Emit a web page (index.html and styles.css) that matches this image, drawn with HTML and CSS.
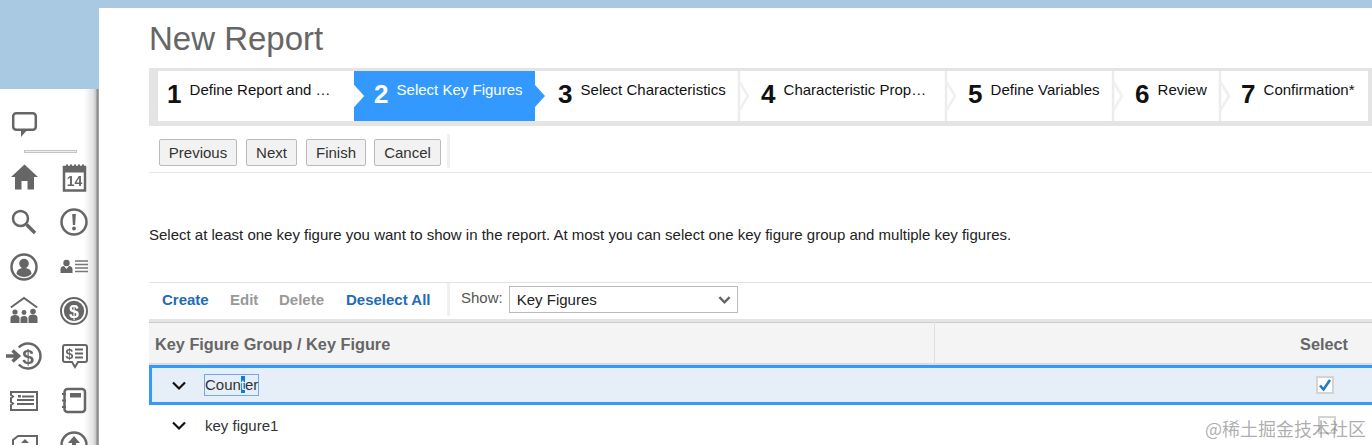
FILE: index.html
```html
<!DOCTYPE html>
<html lang="en">
<head>
<meta charset="utf-8">
<title>New Report</title>
<link rel="stylesheet" href="styles.css">
</head>
<body>
<aside class="side">
  <div class="chat-row">
    <svg class="ico" viewBox="0 0 30 30"><rect x="3.2" y="4.2" width="22.6" height="16.6" rx="3" class="ln"/><path d="M11 20h7l-7 8z" class="fl"/></svg>
  </div>
  <div class="side-rule"></div>
  <div class="ico-grid">
    <svg class="ico" viewBox="0 0 30 30"><path d="M14.5 1.5 1 14h4v12.5h6.5V18h6v8.500h6.500V14H28z" class="fl"/></svg>
    <svg class="ico" viewBox="0 0 30 30"><rect x="4" y="4" width="21" height="23.500" class="ln"/><rect x="3" y="3" width="23" height="6.500" class="fl"/><path d="M7 1.500v5M11 1.500v5M15 1.500v5M19 1.500v5M23 1.500v5" class="wl"/><text x="14.500" y="23" class="ic-t ic-14">14</text></svg>
    <svg class="ico" viewBox="0 0 30 30"><circle cx="10.500" cy="11.500" r="7.500" class="ln"/><path d="M16.500 17.500 25 26" class="ln thick"/></svg>
    <svg class="ico" viewBox="0 0 30 30"><circle cx="14" cy="15" r="12.500" class="ln"/><path d="M12.200 7h3.600l-.7 11h-2.200z" class="fl"/><circle cx="14" cy="21.500" r="1.900" class="fl"/></svg>
    <svg class="ico" viewBox="0 0 30 30"><circle cx="14" cy="15" r="12.500" class="ln"/><circle cx="14" cy="11.500" r="4.800" class="fl"/><path d="M6.500 22c0-4.500 4-6 7.500-6s7.500 1.500 7.500 6c-2 2-5 3-7.500 3s-5.500-1-7.500-3z" class="fl"/></svg>
    <svg class="ico" viewBox="0 0 30 30"><circle cx="6.500" cy="11" r="3.200" class="fl"/><path d="M.5 21v-4c0-2 2-3 3.500-3l2.500 3 2.500-3c1.500 0 3.500 1 3.500 3v4z" class="fl"/><path d="M15 9h13M15 12.500h13M15 16h13M15 19.500h13" class="th"/></svg>
    <svg class="ico" viewBox="0 0 30 30"><path d="M.8 11.500 14 2l13.200 9.500" class="md"/><circle cx="5" cy="16" r="2.600" class="fl"/><circle cx="14" cy="16.500" r="2.400" class="fl"/><circle cx="23" cy="15.500" r="2.800" class="fl"/><path d="M.5 27v-5c0-2 2-3 4.500-3s4.500 1 4.500 3v5zM10.500 27v-4.500c0-1.500 1.500-2.500 3.500-2.500s3.500 1 3.500 2.500V27zM18.500 27v-5.500c0-2 2-3 4.500-3s4.500 1 4.500 3V27z" class="fl"/></svg>
    <svg class="ico" viewBox="0 0 30 30"><circle cx="14" cy="15" r="13" class="md"/><circle cx="14" cy="15" r="10.200" class="fl"/><text x="14" y="21.500" class="ic-t ic-w">$</text></svg>
    <svg class="ico" viewBox="0 0 30 30"><path d="M8.800 6.500A12.500 12.500 0 1 1 8.800 23.500" class="ln"/><path d="M-4 15H7M2.500 9.500 8.500 15l-6 5.500" class="ln thick"/><text x="18" y="22.500" class="ic-t ic-d">$</text></svg>
    <svg class="ico" viewBox="0 0 30 30"><path d="M5 4h20a2 2 0 0 1 2 2v13a2 2 0 0 1-2 2h-7l-3 5-3-5H5a2 2 0 0 1-2-2V6a2 2 0 0 1 2-2z" class="md"/><text x="9.500" y="17.500" class="ic-t ic-s">$</text><path d="M15 8.500h8M15 12.500h8M15 16.500h8" class="md"/></svg>
    <svg class="ico" viewBox="0 0 30 30"><path d="M1 7h26v18H1v-5l2-1.500-2-1.500v-4l2-1.500-2-1.500z" class="md"/><rect x="8" y="10" width="3" height="2.500" class="fl"/><path d="M12 11.500h12M7 15h17M7 19h17" class="md"/></svg>
    <svg class="ico" viewBox="0 0 30 30"><rect x="4.500" y="4" width="20.500" height="23" rx="3" class="ln"/><rect x="10" y="8" width="11" height="4.500" class="fl"/><path d="M2 9h4M2 15.500h4M2 22h4" class="md"/></svg>
    <svg class="ico" viewBox="0 0 30 30"><path d="M3 30V10l5-4h19v24" class="md"/><path d="M15 9l4 4h-8z" class="fl"/></svg>
    <svg class="ico" viewBox="0 0 30 30"><circle cx="14" cy="15" r="12.500" class="ln"/><path d="M14 6l6 7h-4v8h-4v-8H8z" class="fl"/></svg>
  </div>
</aside>

<main class="main">
  <h1 class="title">New Report</h1>

  <ol class="stepper">
    <li class="step w1"><b class="num">1</b><span class="lab">Define Report and …</span>
      <svg class="notch" viewBox="0 0 12 50"><path d="M0 14 10 25 0 36z" class="notch-w"/></svg></li>
    <li class="step w2 current"><b class="num">2</b><span class="lab">Select Key Figures</span>
      <svg class="tip" viewBox="0 0 12 50"><path d="M0 14 10 25 0 36z" class="tip-b"/></svg></li>
    <li class="step w3"><b class="num">3</b><span class="lab">Select Characteristics</span>
      <svg class="sep" viewBox="0 0 14 50"><path d="M2 0v50" class="sep-l"/><path d="M2 10 11 25 2 40" class="sep-c"/></svg></li>
    <li class="step w4"><b class="num">4</b><span class="lab">Characteristic Prop…</span>
      <svg class="sep" viewBox="0 0 14 50"><path d="M2 0v50" class="sep-l"/><path d="M2 10 11 25 2 40" class="sep-c"/></svg></li>
    <li class="step w5"><b class="num">5</b><span class="lab">Define Variables</span>
      <svg class="sep" viewBox="0 0 14 50"><path d="M2 0v50" class="sep-l"/><path d="M2 10 11 25 2 40" class="sep-c"/></svg></li>
    <li class="step w6"><b class="num">6</b><span class="lab">Review</span>
      <svg class="sep" viewBox="0 0 14 50"><path d="M2 0v50" class="sep-l"/><path d="M2 10 11 25 2 40" class="sep-c"/></svg></li>
    <li class="step w7"><b class="num">7</b><span class="lab">Confirmation*</span></li>
  </ol>

  <div class="actions">
    <button class="btn b-prev" type="button">Previous</button>
    <button class="btn b-next" type="button">Next</button>
    <button class="btn b-fin" type="button">Finish</button>
    <button class="btn b-can" type="button">Cancel</button>
    <span class="vbar"></span>
  </div>

  <p class="hint">Select at least one key figure you want to show in the report. At most you can select one key figure group and multiple key figures.</p>

  <div class="tools">
    <a class="tl tl-live l-create">Create</a>
    <a class="tl l-edit">Edit</a>
    <a class="tl l-del">Delete</a>
    <a class="tl tl-live l-desel">Deselect All</a>
    <span class="vbar2"></span>
    <span class="show">Show:</span>
    <div class="sel">Key Figures
      <svg class="sel-ch" viewBox="0 0 14 10"><path d="M1.500 2 7 7.500 12.500 2"/></svg>
    </div>
  </div>

  <div class="thead">
    <div class="th1">Key Figure Group / Key Figure</div>
    <div class="th2">Select</div>
  </div>
  <div class="row active">
    <svg class="chev" viewBox="0 0 14 10"><path d="M1 1.500 7 7.500 13 1.500"/></svg>
    <span class="name focus">Coun<span class="mark">t</span>er</span>
    <span class="cb checked"><svg viewBox="0 0 14 14"><path d="M2 7.500 5.500 11.500 12 2"/></svg></span>
  </div>
  <div class="row">
    <svg class="chev" viewBox="0 0 14 10"><path d="M1 1.500 7 7.500 13 1.500"/></svg>
    <span class="name">key figure1</span>
    <span class="cb"></span>
  </div>
</main>
<div class="wm">@稀土掘金技术社区</div>
</body>
</html>
```
FILE: styles.css
```css
* { box-sizing: border-box; }
html, body { margin: 0; height: 445px; overflow: hidden; }
body {
  display: flex;
  background: #a9c8e2;
  font-family: "Liberation Sans", Arial, sans-serif;
  color: #333;
  position: relative;
}

/* sidebar */
.side {
  flex: 0 0 99px;
  margin-top: 89px;
  padding-top: 13px;
  overflow: hidden;
  background: linear-gradient(90deg, #fff 0, #fff 84px, #e4e4e4 93px, #c4c4c4 96px, #8c8c8c 97px, #8c8c8c 98px, #bbb 99px);
}
.chat-row { width: 50px; height: 44.5px; display: flex; align-items: center; justify-content: center; }
.side-rule { width: 53px; height: 3px; margin: 3px 0 3px 24px; border: 1px solid #c4c4c4; background: #eee; }
.ico-grid { display: grid; grid-template-columns: 50px 50px; grid-auto-rows: 44.5px; place-items: center; }
.ico { width: 30px; height: 30px; overflow: visible; filter: blur(.35px); }
.ln { fill: none; stroke: #666; stroke-width: 2.5; }
.md { fill: none; stroke: #666; stroke-width: 2; }
.th { fill: none; stroke: #777; stroke-width: 1.5; }
.thick { stroke-width: 3.5; }
.fl { fill: #666; }
.wl { fill: none; stroke: #666; stroke-width: 2; stroke-dasharray: 2 1; }
.ic-t { font-family: "Liberation Sans", Arial, sans-serif; font-weight: 700; text-anchor: middle; fill: #666; }
.ic-14 { font-size: 14px; }
.ic-w { font-size: 18px; fill: #fff; }
.ic-d { font-size: 21px; }
.ic-s { font-size: 14px; }

/* main panel */
.main { flex: 1; min-width: 0; margin-top: 8px; padding-left: 50px; background: #fff; }
.title { margin: 0; height: 60px; font-size: 33px; line-height: 62px; font-weight: 400; color: #666; }

.stepper {
  display: flex;
  height: 58px;
  margin: 0;
  padding: 0;
  list-style: none;
  background: #e4e4e4;
  border-style: solid;
  border-color: #e4e4e4;
  border-width: 3px 4px 5px 9px;
}
.step { position: relative; display: flex; flex: none; background: #fff; color: #111; }
.w1 { width: 196px; padding-left: 9px; }
.w2 { width: 181px; padding-left: 20px; }
.w3 { width: 204px; padding-left: 23px; }
.w4 { width: 207px; padding-left: 22px; }
.w5 { width: 167px; padding-left: 22px; }
.w6 { width: 107px; padding-left: 22px; }
.w7 { width: 148px; padding-left: 21px; }
.current { background: #39f; color: #fff; }
.num { width: 22.6px; font-size: 26px; line-height: 47px; font-weight: 700; }
.lab { font-size: 15px; line-height: 38px; white-space: nowrap; }
.notch, .tip { position: absolute; top: 0; left: 100%; width: 12px; height: 50px; z-index: 2; }
.notch-w { fill: #fff; stroke: #e8e8e8; stroke-width: .6; }
.tip-b { fill: #39f; }
.w3 .sep, .w4 .sep, .w5 .sep, .w6 .sep { position: absolute; top: 0; left: calc(100% - 2px); width: 14px; height: 50px; z-index: 2; }
.sep-l { fill: none; stroke: #ececec; stroke-width: 2.5; }
.sep-c { fill: none; stroke: #f0f0f0; stroke-width: 2.5; }

.actions {
  display: flex;
  align-items: center;
  height: 47px;
  padding: 6px 0 0 10px;
  border-bottom: 1px solid #e5e5e5;
}
.btn {
  flex: none;
  height: 27px;
  margin: 0 9px 0 0;
  padding: 0;
  border: 1px solid #bbb;
  border-radius: 2px;
  background: #f2f2f2;
  font: 15px "Liberation Sans", Arial, sans-serif;
  color: #333;
}
.b-prev { width: 78px; }
.b-next { width: 51px; }
.b-fin { width: 60px; margin-right: 8px; }
.b-can { width: 67px; margin-right: 6px; }
.vbar { width: 3px; height: 34px; margin-top: -3px; background: #f0f0f0; }

.hint { margin: 53px 0 0; height: 56px; font-size: 15px; line-height: 17px; color: #222; }

.tools {
  display: flex;
  align-items: center;
  height: 37px;
  padding-bottom: 3px;
  border-top: 1px solid #e2e2e2;
  font-size: 15px;
}
.tl { font-weight: 700; color: #999; flex: none; }
.tl-live { color: #1f6bb8; }
.l-create { width: 68px; margin-left: 13px; }
.l-edit { width: 49px; }
.l-del { width: 67px; }
.l-desel { width: 101px; }
.vbar2 { width: 3px; height: 33px; background: #f0f0f0; }
.show { margin: -4px 6px 0 11px; color: #555; }
.sel {
  position: relative;
  width: 229px;
  height: 27px;
  padding-left: 7px;
  border: 1px solid #bbb;
  background: #fff;
  color: #222;
  line-height: 25px;
}
.sel-ch { position: absolute; right: 6px; top: 8px; width: 13px; height: 10px; fill: none; stroke: #666; stroke-width: 2.6; }

.thead {
  display: flex;
  height: 46px;
  border-top: 3px solid #e4e4e4;
  border-bottom: 2px solid #ddd;
  background: #f4f4f4;
  box-shadow: inset 0 1px 0 #ccc;
  font-size: 16.3px;
  font-weight: 700;
  color: #666;
  line-height: 44px;
}
.th1 { width: 786px; padding-left: 6px; border-right: 1px solid #e0e0e0; }
.th2 { flex: 1; padding-right: 24px; text-align: right; }

.row { display: flex; align-items: center; height: 40px; padding-left: 23px; font-size: 15px; }
.row.active { background: #e6eef8; border: 3px solid #39f; border-right: 0; padding-left: 20px; }
.chev { width: 14px; height: 10px; margin-top: 2px; flex: none; fill: none; stroke: #111; stroke-width: 2.2; }
.name { margin-left: 19px; flex: none; color: #333; }
.focus { width: 55px; height: 22px; margin-left: 18px; line-height: 20px; border: 1px solid #6fa8f5; white-space: nowrap; }
.mark { background: #0a7ae8; color: #fff; }
.cb { margin-left: auto; width: 18px; height: 18px; border: 2px solid #d4d4d4; background: #fff; flex: none; margin-right: 36px; }
.active .cb { margin-right: 38px; }
.cb svg { display: block; width: 14px; height: 14px; fill: none; stroke: #1a7fc0; stroke-width: 2.6; }

/* watermark overlay */
.wm {
  position: absolute;
  right: 6px;
  bottom: 6px;
  font: 18px/22px "Noto Sans CJK SC", sans-serif;
  color: rgba(120,120,120,.6);
}
```
